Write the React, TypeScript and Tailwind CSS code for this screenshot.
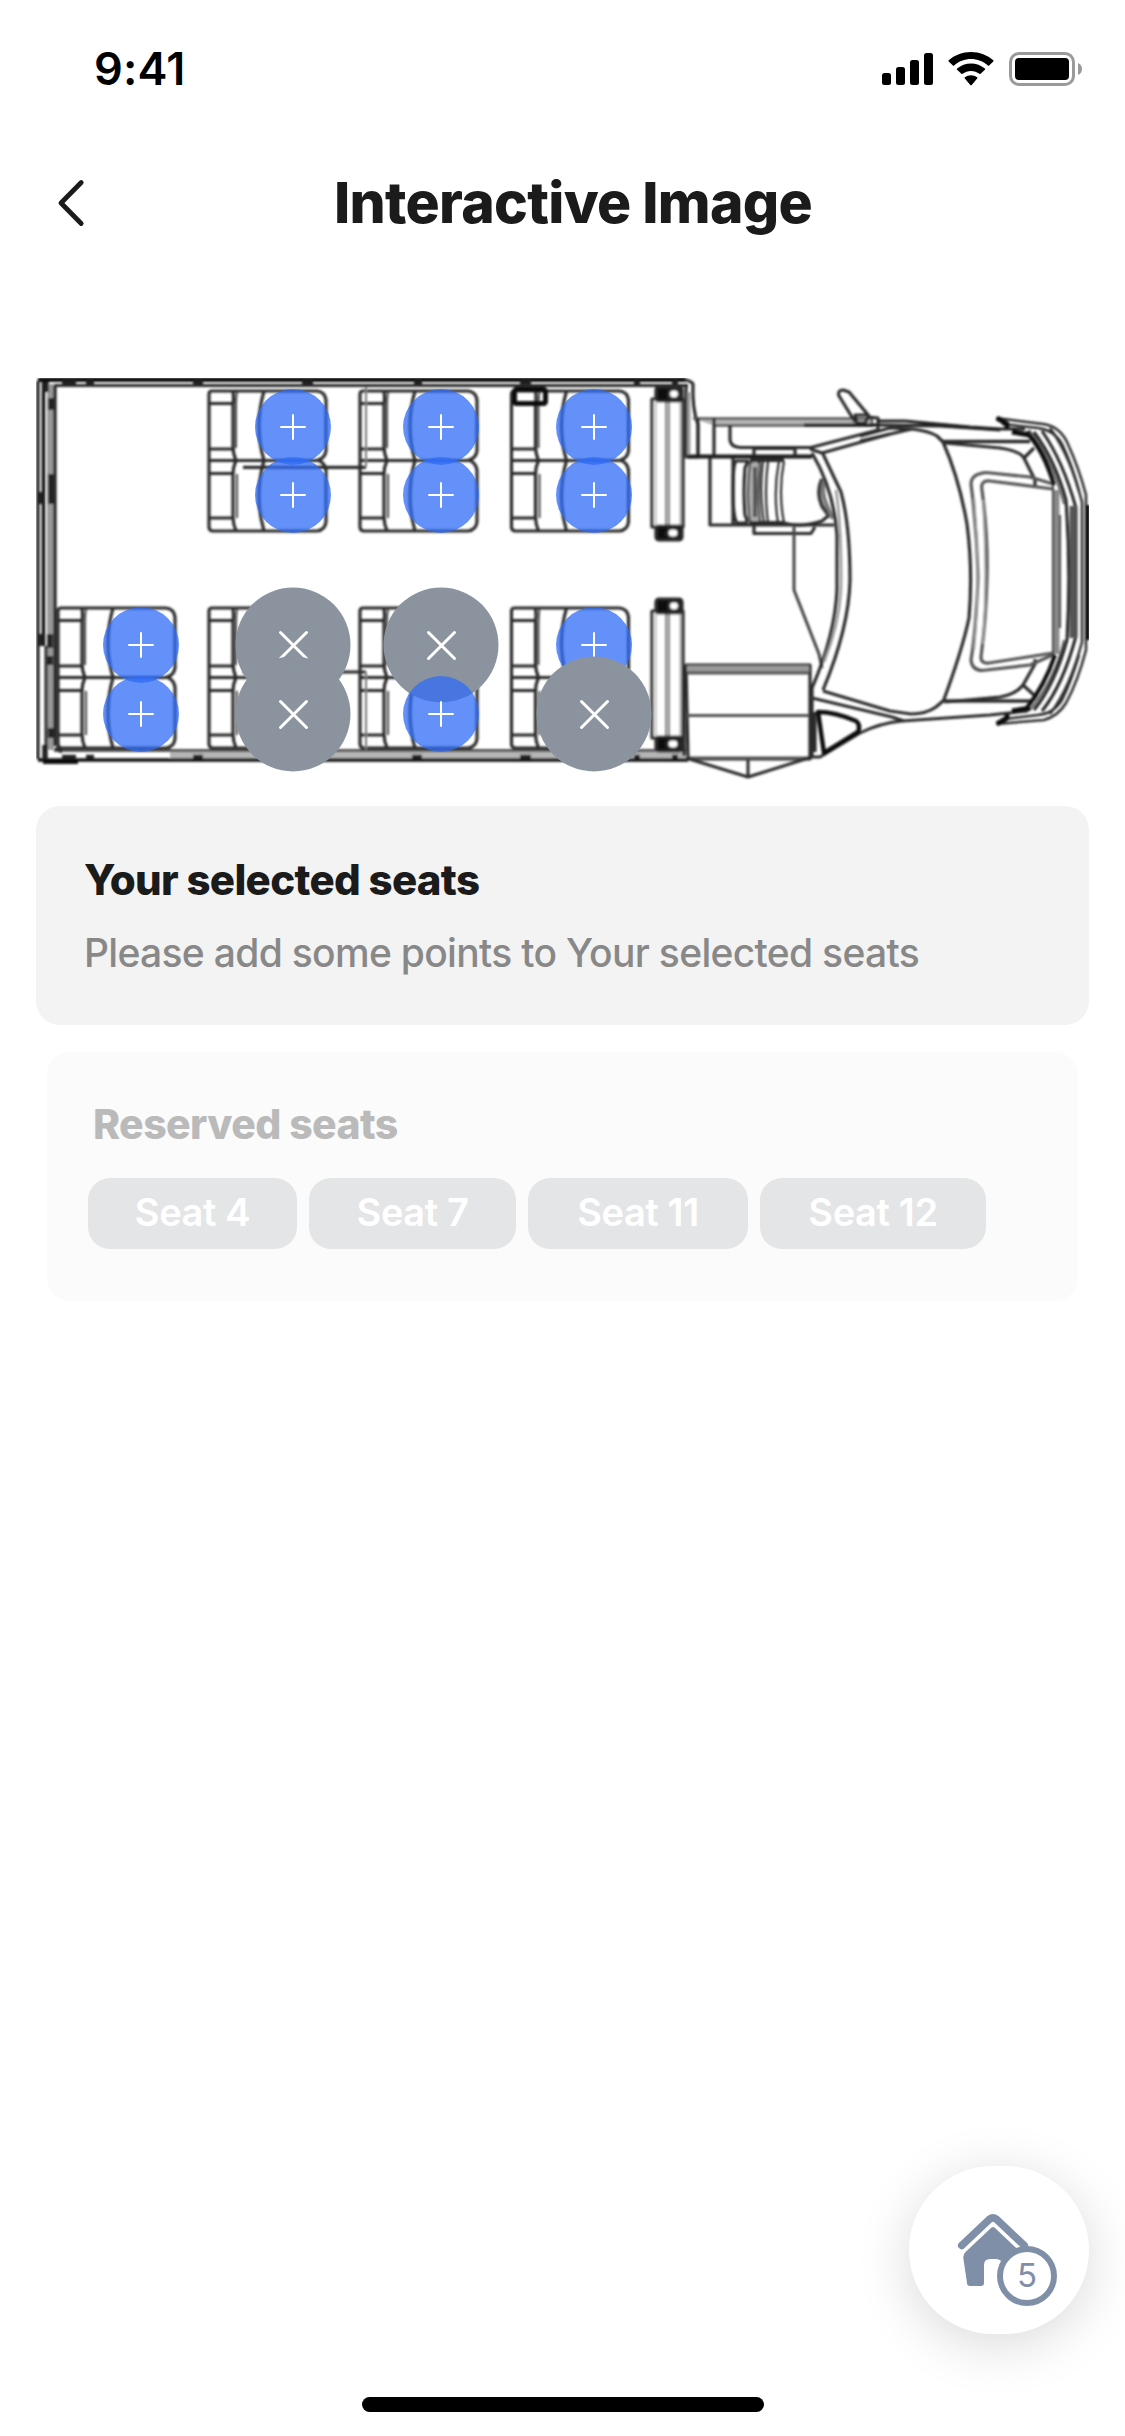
import React from "react";

type Marker = { x: number; y: number; reserved?: boolean };

// Marker centres, relative to the top-left corner of the floor plan.
const markers: Marker[] = [
  { x: 257, y: 49 },
  { x: 257, y: 117 },
  { x: 405, y: 49 },
  { x: 405, y: 117 },
  { x: 558, y: 49 },
  { x: 558, y: 117 },
  { x: 105, y: 267 },
  { x: 105, y: 336 },
  { x: 257, y: 267, reserved: true },
  { x: 257, y: 336, reserved: true },
  { x: 405, y: 267, reserved: true },
  { x: 405, y: 336 },
  { x: 558, y: 267 },
  { x: 558, y: 336, reserved: true },
];

const reservedSeats = [
  { label: "Seat 4", width: "w-[209px]" },
  { label: "Seat 7", width: "w-[207px]" },
  { label: "Seat 11", width: "w-[220px]" },
  { label: "Seat 12", width: "w-[226px]" },
];

function StatusBar() {
  return (
    <div className="flex h-[120px] items-start justify-between pt-[39px] pr-[43px] pl-[94px]">
      <span className="text-[45px] leading-[60px] font-semibold tracking-[0.200px] whitespace-nowrap text-black">9:41</span>
      <svg className="mt-[11px] h-[38px] w-[200px]" viewBox="882 50 200 38">
        <rect x="882" y="73" width="9" height="12" rx="2.500" />
        <rect x="896" y="67" width="9" height="18" rx="2.500" />
        <rect x="910" y="60" width="9" height="25" rx="2.500" />
        <rect x="924" y="53" width="9" height="32" rx="2.500" />
        <g transform="translate(971 -0.700) scale(1 0.940)">
          <path d="M0 56c8.500 0 16.500 3.300 22.300 8.900q.5.600 0 1.200l-4.200 4.200q-.6.600-1.200 0C12.300 66 6.300 63.500 0 63.500s-12.300 2.500-16.900 6.800q-.6.600-1.200 0l-4.200-4.200q-.5-.6 0-1.200C-16.500 59.300-8.500 56 0 56Z" />
          <path d="M0 68.300c5.200 0 10 2 13.900 5.400q.6.600 0 1.200l-4.300 4.300q-.6.500-1.200 0C6 77.300 3.100 76.200 0 76.200s-6 1.100-8.400 3q-.6.500-1.200 0l-4.300-4.300q-.6-.6 0-1.200C-10 70.300-5.200 68.300 0 68.300Z" />
          <path d="M0 80.800c2.300 0 4.400.8 6.200 2.200q.6.600 0 1.200L.7 91.100q-.7.700-1.400 0L-6.200 84.200q-.6-.6 0-1.200C-4.400 81.600-2.300 80.800 0 80.800Z" />
        </g>
        <rect x="1010.500" y="53.500" width="63" height="31" rx="8.500" fill="none" stroke="#9a9a9a" strokeWidth="3" />
        <rect x="1015" y="58" width="54" height="22" rx="4" />
        <path d="M1078 63v12c2.500-1 4-3.300 4-6s-1.500-5-4-6Z" fill="#9a9a9a" />
      </svg>
    </div>
  );
}

function Header() {
  return (
    <header className="flex h-[166px] items-center pl-[56px]">
      <svg className="h-[54px] w-[30px]" viewBox="56 176 30 54" fill="none" stroke="#1b1b1b" strokeWidth="4.800" strokeLinecap="round" strokeLinejoin="round">
        <path d="M81.200 182.500L61 203L81.200 223.500" />
      </svg>
      <h1 className="ml-[248px] text-[57px] leading-[72px] font-extrabold tracking-[-0.720px] whitespace-nowrap text-[#1b1b1b]">Interactive Image</h1>
    </header>
  );
}

function SeatPair({ x, y }: { x: number; y: number }) {
  return (
    <g transform={`translate(${x} ${y})`}>
      <path d="M3 0H108Q116 1 117 9V60Q116 67 109 69Q116 72 117 79V131Q116 139 108 140H3Q0 139 0 136V3Q0 0 3 0Z" />
      <path d="M0 69.500H112" />
      <path d="M24 0Q25 6 24 14V56Q24 62 27 69.500Q24 76 24 83V126Q24 133 27 140" />
      <path d="M28 0Q27 8 27 16V57M28 83V127" strokeWidth="1.700" />
      <path d="M0 12.500H24M0 58H24M0 82.500H24M0 127H24" />
      <path d="M55 0Q45 35 55 69.500Q45 105 55 140" />
    </g>
  );
}

function Rail({ y, height }: { y: number; height: number }) {
  return (
    <g>
      <rect x="652" y={y} width="31" height={height} fill="#fff" />
      <path d={`M666 ${y}v${height}M669 ${y}v${height}`} strokeWidth="1.600" />
      <path d={`M656 ${y}v${height}M680 ${y}v${height}`} strokeWidth="1" stroke="#888" />
      <rect x="656" y={y - 12} width="26" height="14" rx="3" fill="#111" />
      <ellipse cx="674" cy={y - 5} rx="5.500" ry="5" fill="#fff" />
      <rect x="656" y={y + height - 1} width="26" height="14" rx="3" fill="#111" />
      <ellipse cx="673" cy={y + height + 6} rx="6" ry="5" fill="#fff" />
    </g>
  );
}

function BusPlan() {
  return (
    <svg className="block h-[404px] w-[1053px]" viewBox="36 378 1053 404" fill="none" stroke="#2c2c2c" strokeWidth="3.200" strokeLinejoin="round">
      <defs>
        <filter id="soften" x="36" y="378" width="1053" height="404" filterUnits="userSpaceOnUse">
          <feGaussianBlur stdDeviation="0.900" />
        </filter>
      </defs>
      <g filter="url(#soften)">
        {/* Body walls */}
        <path d="M47 384H54V750H47Z" fill="#999" stroke="none" />
        <path d="M38 381V759M55 386V746" stroke="#222" />
        <path d="M43.500 380V646" stroke="#111" strokeWidth="3.500" />
        <path d="M46 646V748" stroke="#333" />
        <path d="M38 379.800H686" stroke="#080808" strokeWidth="4.500" />
        <path d="M54 385.500H688" />
        <path d="M170 752H686V759H170Z" fill="#b5b5b5" stroke="none" />
        <path d="M54 750.500H686" stroke="#555" />
        <path d="M38 760H688" stroke="#111" strokeWidth="3.500" />
        <path d="M43 762H78" stroke="#080808" strokeWidth="4" />
        <path d="M62 382.500H76M86 382.500H94M193 382.500H203M302 382.500H313M414 382.500H422M520 382.500H531M634 382.500H640M672 382.500H678M62 757H76M86 757H94M193 757H203M412 757H422M520 757H531M634 757H640M672 757H678" stroke="#222" strokeWidth="4.500" />
        <path d="M46 382V392M51 398V410M51 474V504M41 492V504M41 634V646M50 634V648M50 656V665M51 728V738M45 745V759" stroke="#222" strokeWidth="5.500" />
        <path d="M55 748L62 752" />

        {/* Passenger seats */}
        <SeatPair x={209} y={391} />
        <SeatPair x={360} y={391} />
        <SeatPair x={511.500} y={391} />
        <SeatPair x={58} y={608} />
        <SeatPair x={209} y={608} />
        <SeatPair x={360} y={608} />
        <SeatPair x={511.500} y={608} />
        <path d="M243 467.300H366M243 672H366" />
        <path d="M366 387V467M366 672V750" stroke="#777" strokeWidth="2" />
        <rect x="514.500" y="389.500" width="31" height="14" rx="2" stroke="#080808" strokeWidth="5" />
        <Rail y={399} height={128} />
        <Rail y={611} height={127} />

        {/* Cab entrance and driver's side */}
        <path d="M686 386V457H698V425Q692 408 693 384Q690 380 684 380" />
        <path d="M689 392V455" stroke="#999" strokeWidth="3" />
        <path d="M693 418.500H872V425.500H714" fill="#b5b5b5" stroke="#555" strokeWidth="2.500" />
        <path d="M804 425H878" stroke="#111" strokeWidth="3" />
        <path d="M698 418V456M714 418V456" />
        <path d="M730 425V440Q731 447 740 447.500H811L878 430V418L868 417" />
        <path d="M688 456.500H812" stroke="#1a1a1a" strokeWidth="4" />
        <path d="M754 455V448.500H795V455M810 449L822 453L890 434" />
        <path d="M855 422L838.500 395Q838 390 843 390L849 392L869 416L865 423H857L855 415L867 415" />
        <path d="M710 458V525H834M733 458V525" />
        <path d="M736 461Q733 464 733 491T737 523H746Q748 521 745 515Q743 492 745 468L748 461Z" />
        <path d="M750 463Q746 492 750 523Q757 526 760 521Q757 492 760 463Q755 459 750 463Z" fill="#aaa" strokeWidth="2" />
        <path d="M755 467V517" stroke="#555" strokeWidth="4" />
        <path d="M763 461Q759 492 764 523M768 461Q764 492 768 523M779 461Q773 492 778 523M784 461Q778 492 784 523" strokeWidth="2.200" />
        <path d="M750 460H784M750 523H784" strokeWidth="4" />
        <path d="M784 523Q800 528 822 521L828 516" />
        <path d="M754 526V533.500H811L815 527" />
        <path d="M822 479Q816 492 822 506L830 517" stroke="#3a3a3a" strokeWidth="4" />
        <path d="M824 482Q821 494 828 508L833 519" stroke="#777" strokeWidth="4" />
        <path d="M794 527V590L819 654L822 668" stroke="#444" strokeWidth="3" />
        {/* Windscreen */}
        <path d="M812 453Q834 490 837 535V590Q835 635 812 688V697" />
        <path d="M823 454L841 492Q850 525 850 580Q849 628 823 690" />
        <path d="M836 490Q842 530 841 590Q839 625 824 662" stroke="#999" strokeWidth="2.500" />
        <path d="M823 691L890 711L911 714Q926 714 936 707L943 701M812 698L892 717L904 721" />

        {/* Step well */}
        <path d="M686 665H810V759H688Z" />
        <path d="M687 669H809" stroke="#999" strokeWidth="7" />
        <path d="M687 673H809M687 715.500H809M688 758H810" stroke="#555" />
        <path d="M684 666V756M812 698V757M815 712V752" />
        <path d="M686 758L748 777L812 757H820L860 733Q880 723 902 721L990 715L1028 711M748 760V777" strokeWidth="3" />
        <path d="M818 712Q835 712 856 721Q861 725 858 732L824 753Q821 732 818 712Z" stroke="#111" strokeWidth="4.500" />

        {/* Bonnet */}
        <path d="M878 421H905L970 427L1000 429H1025M878 425L940 426L1000 430" stroke="#222" strokeWidth="2.800" />
        <path d="M860 441L912 429Q929 431 937 436L943 442M860 436L890 428L912 429" />
        <path d="M943 442Q959 478 967 524Q973 570 969 618Q962 651 943 702" />
        <path d="M943 441.500H1030M943 701H1032" strokeWidth="3.500" />
        <path d="M945 443L1000 448Q1020 451 1024 458L1034 448M1024 458L1035 480V486" />
        <path d="M945 702L1000 697Q1016 694 1023 685L1034 695M1023 685L1035 664V659" />
        <g stroke="#555">
          <path d="M1053 484L1030 477L986 472.500Q971 474 971 484Q977 530 978 577Q976 630 971 660Q972 670 982 670.500L1030 665L1055 654" />
          <path d="M1053 489L990 481Q980 480 982 490Q988 535 987 577Q986 620 981 657Q981 664 989 663L1053 653" />
        </g>
        <path d="M974 498Q981 575 974 650M983 500Q988 575 983 644" stroke="#999" strokeWidth="2" />
        {/* Front bumper */}
        <path d="M1056 490V654" stroke="#888" strokeWidth="7" />
        <path d="M1053 484V660M1060 515V628" stroke="#444" strokeWidth="2" />
        <path d="M1026 432Q1043 449 1054 485M1055 655Q1045 685 1026 709" stroke="#111" strokeWidth="4" />
        <path d="M1034 432Q1055 460 1066 500Q1071 570 1067 640Q1055 684 1034 710" stroke="#222" strokeWidth="3" />
        <path d="M1042 431Q1063 461 1076 508V636Q1063 685 1042 711" stroke="#222" strokeWidth="3" />
        <path d="M1073 506V638" stroke="#555" strokeWidth="7" />
        <path d="M1029 430Q1052 459 1064 504M1064 640Q1055 680 1029 711" strokeWidth="1.500" />
        <path d="M1050 428Q1070 455 1082 502V642Q1070 688 1050 714" strokeWidth="2.500" />
        <path d="M996 418L1043 424Q1059 426 1067 442Q1079 468 1086 495V650Q1078 681 1066 703Q1058 716 1044 720L996 724" strokeWidth="2.500" />
        <path d="M1002 424L1038 428Q1054 430 1062 444Q1072 465 1079 491M1079 655Q1071 682 1062 700Q1053 714 1038 715L1005 719" strokeWidth="2.500" />
        <path d="M1088 505V640" stroke="#080808" strokeWidth="3.500" />
        <path d="M997 418L1007 424V428M997 724L1007 718V714M1012 432L1030 435M1012 711L1030 708" stroke="#111" strokeWidth="5" />
      </g>
    </svg>
  );
}

function SeatMarker({ x, y, reserved }: Marker) {
  return reserved ? (
    <button aria-label="Reserved seat" className="absolute flex size-[115px] -translate-x-1/2 -translate-y-1/2 items-center justify-center rounded-full bg-[#8b939f]" style={{ left: x, top: y }}>
      <svg className="size-[32px]" viewBox="-16 -16 32 32" stroke="#fff" strokeWidth="3" strokeLinecap="round">
        <path d="M-13-13L13 13M13-13L-13 13" />
      </svg>
    </button>
  ) : (
    <button aria-label="Free seat" className="absolute flex size-[76px] -translate-x-1/2 -translate-y-1/2 items-center justify-center rounded-full bg-[#306cf7]/75" style={{ left: x, top: y }}>
      <svg className="size-[28px]" viewBox="-14 -14 28 28" stroke="#fff" strokeWidth="2" strokeLinecap="round">
        <path d="M-12 0H12M0-12V12" />
      </svg>
    </button>
  );
}

function HomeButton() {
  return (
    <button aria-label="Home" className="absolute right-[36px] bottom-[102px] flex h-[168px] w-[180px] justify-center rounded-full bg-white shadow-[0_10px_54px_rgba(0,0,0,0.150)]">
      <svg className="mt-[46px] -ml-[12px] h-[76px] w-[74px]" viewBox="956 2212 74 76" fill="none">
        <path d="M961.700 2245.500L989.500 2219.200Q993 2216.500 996.500 2219.200L1024.300 2245.500" stroke="#808fa8" strokeWidth="7.500" strokeLinecap="round" strokeLinejoin="round" />
        <path d="M991.500 2227.500Q993 2226.300 994.500 2227.500L1020.500 2252Q1023 2254.500 1022.700 2258L1019.300 2283Q1019 2286 1016 2286H1005Q1002 2286 1002 2283V2265Q1002 2259 996 2259H990Q984 2259 984 2265V2283Q984 2286 981 2286H970Q967 2286 967 2283L963.300 2258Q963 2254.500 965.500 2252Z" fill="#808fa8" />
      </svg>
      <span className="absolute top-[80px] left-[88px] flex size-[60px] items-center justify-center rounded-full border-[6px] border-[#808fa8] bg-white pb-[2px] text-[33px] leading-none font-normal text-[#808fa8]">5</span>
    </button>
  );
}

export default function App() {
  return (
    <div className="relative flex h-[2436px] w-[1125px] flex-col overflow-hidden bg-white font-['Inter',sans-serif]">
      <StatusBar />
      <Header />
      <main className="flex flex-col px-[36px] pt-[92px]">
        <div className="relative">
          <BusPlan />
          {markers.map((m) => (
            <SeatMarker key={`${m.x}-${m.y}`} {...m} />
          ))}
        </div>

        <section className="mt-[24px] h-[219px] rounded-[24px] bg-[#f3f3f3] px-[48px] pt-[44px]">
          <h2 className="text-[42px] leading-[60px] font-extrabold tracking-[-0.690px] whitespace-nowrap text-[#1b1b1b]">Your selected seats</h2>
          <p className="mt-[13px] text-[39px] leading-[60px] font-[450] tracking-[-0.690px] whitespace-nowrap text-[#888]">Please add some points to Your selected seats</p>
        </section>

        <section className="mx-[11px] mt-[27px] h-[249px] rounded-[23px] bg-[#fbfbfb] px-[41px] pt-[42px]">
          <h2 className="pl-[5px] text-[41px] leading-[60px] font-extrabold tracking-[-0.600px] whitespace-nowrap text-[#bababa]">Reserved seats</h2>
          <ul className="mt-[24px] flex gap-[12px]">
            {reservedSeats.map((seat) => (
              <li key={seat.label} className={`flex h-[71px] items-center justify-center rounded-[22px] bg-[#e4e5e7] text-[38px] leading-[60px] font-semibold tracking-[-0.400px] whitespace-nowrap text-white ${seat.width}`}>
                <span className="-mt-[4px]">{seat.label}</span>
              </li>
            ))}
          </ul>
        </section>
      </main>

      <HomeButton />
      <div className="absolute bottom-[24px] left-[362px] h-[15px] w-[402px] rounded-full bg-black" />
    </div>
  );
}
